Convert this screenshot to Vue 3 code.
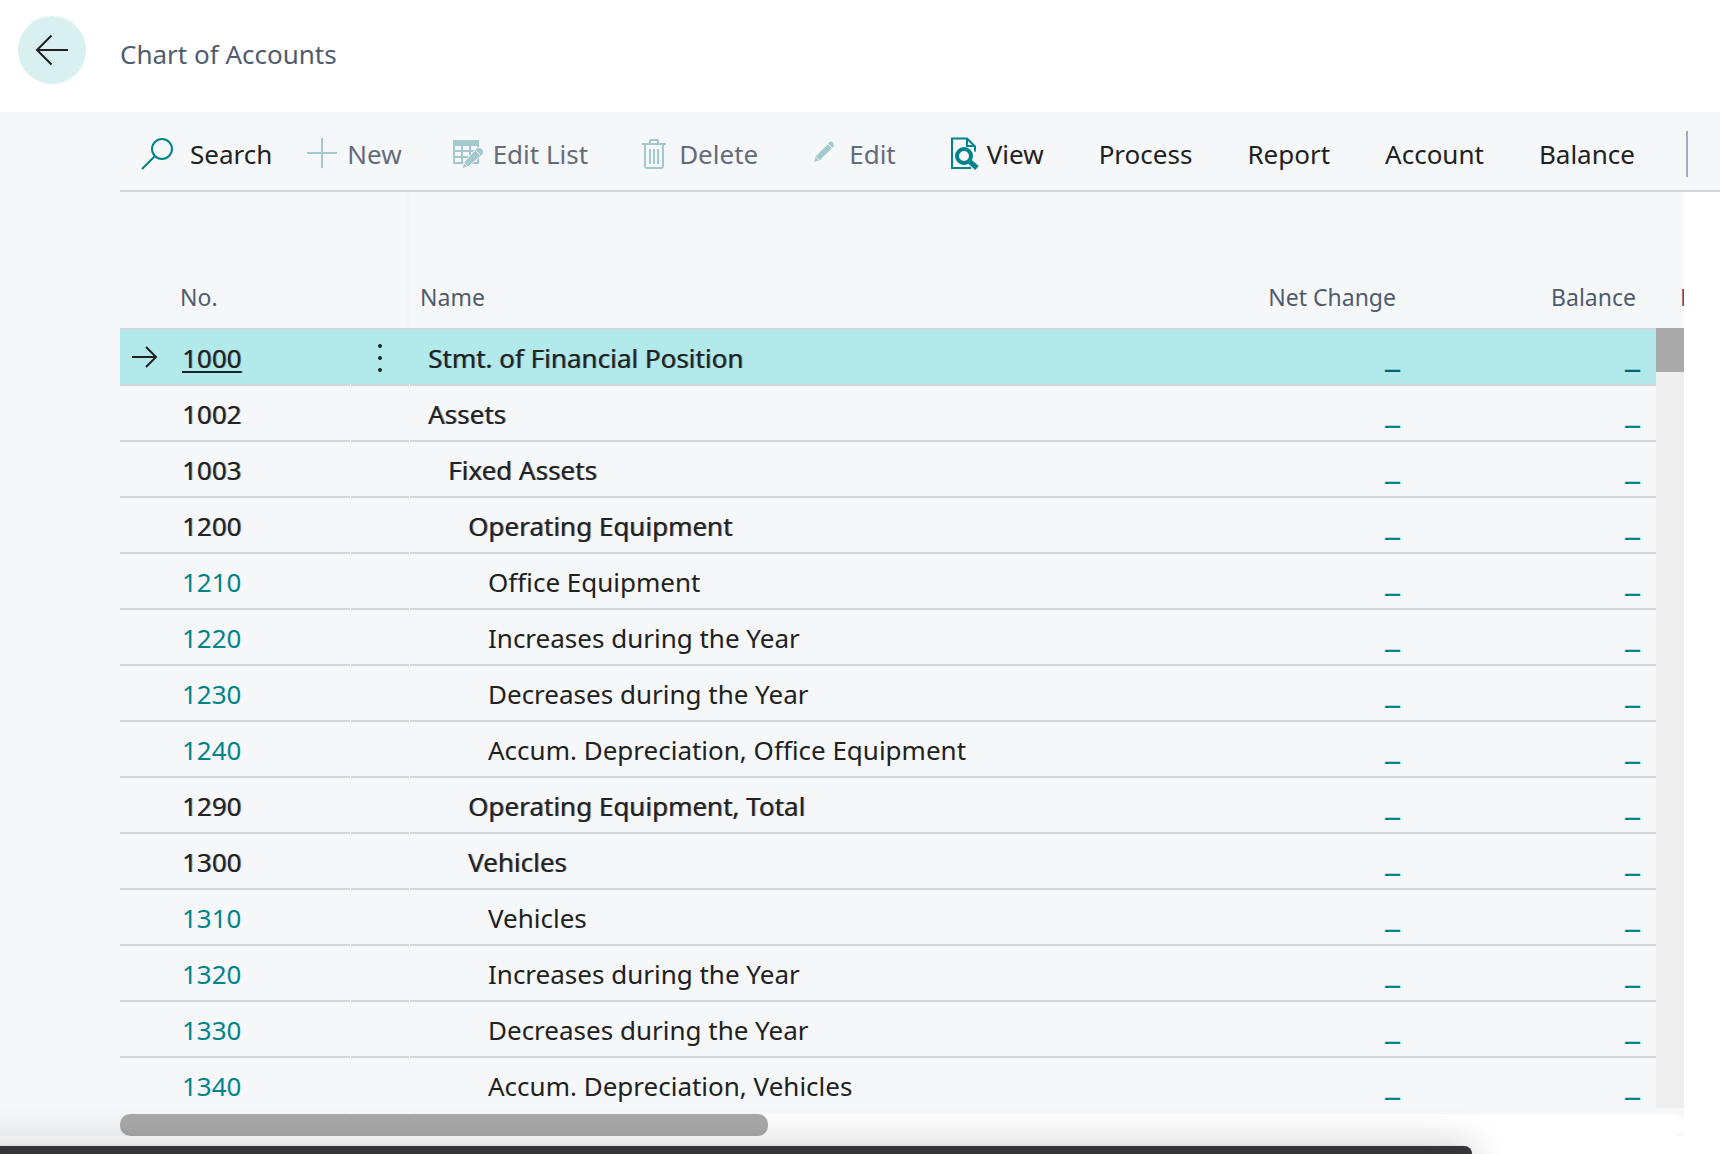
<script setup>
import { ref } from 'vue'

const actions = [
  { label: 'Search', icon: 'search' },
  { label: 'New', icon: 'plus', disabled: true },
  { label: 'Edit List', icon: 'list', disabled: true },
  { label: 'Delete', icon: 'trash', disabled: true },
  { label: 'Edit', icon: 'pencil', disabled: true },
  { label: 'View', icon: 'view' },
  { label: 'Process' },
  { label: 'Report' },
  { label: 'Account' },
  { label: 'Balance' },
]

const accounts = [
  { no: '1000', name: 'Stmt. of Financial Position', level: 0, heading: true },
  { no: '1002', name: 'Assets', level: 0, heading: true },
  { no: '1003', name: 'Fixed Assets', level: 1, heading: true },
  { no: '1200', name: 'Operating Equipment', level: 2, heading: true },
  { no: '1210', name: 'Office Equipment', level: 3 },
  { no: '1220', name: 'Increases during the Year', level: 3 },
  { no: '1230', name: 'Decreases during the Year', level: 3 },
  { no: '1240', name: 'Accum. Depreciation, Office Equipment', level: 3 },
  { no: '1290', name: 'Operating Equipment, Total', level: 2, heading: true },
  { no: '1300', name: 'Vehicles', level: 2, heading: true },
  { no: '1310', name: 'Vehicles', level: 3 },
  { no: '1320', name: 'Increases during the Year', level: 3 },
  { no: '1330', name: 'Decreases during the Year', level: 3 },
  { no: '1340', name: 'Accum. Depreciation, Vehicles', level: 3 },
]

const selected = ref('1000')
</script>

<template>
  <div class="page">
    <header class="top">
      <button class="back" type="button" aria-label="Back">
        <svg width="36" height="36" viewBox="0 0 36 36" fill="none" stroke="#212121" stroke-width="2">
          <path d="M34 18H3M17.500 3.500 3 18l14.500 14.500" />
        </svg>
      </button>
      <h1>Chart of Accounts</h1>
    </header>

    <main class="content">
      <nav class="toolbar" aria-label="Actions">
        <button
          v-for="a in actions"
          :key="a.label"
          type="button"
          :class="['action', { wide: a.icon === 'search', tab: !a.icon }]"
          :disabled="a.disabled"
        >
          <svg v-if="a.icon === 'search'" width="32" height="32" viewBox="0 0 32 32" fill="none" stroke="#00838a" stroke-width="2">
            <circle cx="20" cy="11" r="10" />
            <path d="M13 18 0 31" />
          </svg>
          <svg v-else-if="a.icon === 'plus'" width="32" height="32" viewBox="0 0 32 32" fill="none" stroke="#a3c9cf" stroke-width="2">
            <path d="M15 0v30M0 15h30" />
          </svg>
          <svg v-else-if="a.icon === 'list'" width="32" height="32" viewBox="0 0 32 32">
            <path fill="#a3c9cf" fill-rule="evenodd" d="M0 2h26v24H0zM2 8v4h6V8zM10 8v4h6V8zM18 8v4h6V8zM2 14v4h6v-4zM10 14v4h6v-4zM18 14v4h6v-4zM2 20v4h6v-4zM10 20v4h6v-4zM18 20v4h6v-4z" />
            <path fill="#a3c9cf" stroke="#f5f7f9" stroke-width="1" d="M9 31l2-7L23 11c2-2 4-2 6 0s2 4 0 6L16 28z" />
            <path stroke="#f5f7f9" stroke-width="1" d="m23 13 4 4M11 25l3 3" />
          </svg>
          <svg v-else-if="a.icon === 'trash'" width="32" height="32" viewBox="0 0 32 32" fill="none" stroke="#a3c9cf" stroke-width="2">
            <path d="M3 6h24M11 6V3q0-1 1-1h6q1 0 1 1v3M6 7v21q0 2 2 2h14q2 0 2-2V7M11 11v15M15 11v15M19 11v15" />
          </svg>
          <svg v-else-if="a.icon === 'pencil'" width="32" height="32" viewBox="0 0 32 32">
            <path fill="#a3c9cf" d="M5 24l2-6L19 6c2-3 4-3 5-1s2 3-1 5L11 22z" />
            <path stroke="#f5f7f9" stroke-width="1" d="m19 6 5 5M7 19l3 3" />
          </svg>
          <svg v-else-if="a.icon === 'view'" width="32" height="32" viewBox="0 0 32 32" fill="none" stroke="#00838a">
            <path stroke-width="2" d="M24 30H5V0.500h15l8 8v5M20 0v8h8" />
            <circle cx="17" cy="18" r="7" stroke-width="4" fill="#f5f7f9" />
            <path stroke-width="5" d="m22 23 8 7" />
          </svg>
          <span>{{ a.label }}</span>
        </button>
        <span class="divider"></span>
      </nav>

      <section class="grid">
        <table>
          <colgroup>
            <col class="c-mark" />
            <col class="c-no" />
            <col class="c-menu" />
            <col />
            <col class="c-num" />
            <col class="c-num" />
            <col class="c-next" />
          </colgroup>
          <thead>
            <tr>
              <th colspan="3" class="h-no" scope="col">No.</th>
              <th class="h-name" scope="col">Name</th>
              <th class="h-num" scope="col">Net Change</th>
              <th class="h-num" scope="col">Balance</th>
              <th class="h-next" scope="col">D</th>
            </tr>
          </thead>
          <tbody>
            <tr
              v-for="row in accounts"
              :key="row.no"
              :class="{ selected: row.no === selected, heading: row.heading }"
              @click="selected = row.no"
            >
              <td class="mark">
                <svg v-if="row.no === selected" width="26" height="24" viewBox="0 0 26 24" fill="none" stroke="#212121" stroke-width="2">
                  <path d="M0 12h24M14 2l10 10-10 10" />
                </svg>
              </td>
              <td class="no"><a href="#">{{ row.no }}</a></td>
              <td class="menu">
                <button v-if="row.no === selected" type="button" aria-label="Show more options">
                  <svg width="4" height="28" viewBox="0 0 4 28" fill="#212121">
                    <circle cx="2" cy="2" r="2" />
                    <circle cx="2" cy="14" r="2" />
                    <circle cx="2" cy="26" r="2" />
                  </svg>
                </button>
              </td>
              <td :class="['name', 'level-' + row.level]">{{ row.name }}</td>
              <td class="num"><a href="#">_</a></td>
              <td class="num"><a href="#">_</a></td>
              <td class="next"></td>
            </tr>
          </tbody>
        </table>
        <div class="v-rail"><div class="v-thumb"></div></div>
        <div class="h-rail"><div class="h-thumb"></div></div>
      </section>
    </main>

    <div class="dock"></div>
  </div>
</template>

<style>
body {
  background: #fff;
  overflow: hidden;
}
</style>

<style scoped>
.page {
  font-family: "Noto Sans", "Open Sans", sans-serif;
  color: #212121;
}
button {
  border: 0;
  padding: 0;
  background: none;
  color: inherit;
  font: inherit;
}
svg {
  display: block;
  flex: none;
  overflow: visible;
}
.top {
  display: flex;
  align-items: flex-start;
  gap: 34px;
  padding: 16px 18px 28px;
}
.back {
  display: flex;
  align-items: center;
  justify-content: center;
  width: 68px;
  height: 68px;
  border-radius: 50%;
  background: #d8f0f0;
}
h1 {
  margin: 20px 0 0;
  font-size: 26px;
  font-weight: 400;
  line-height: 36px;
  color: #505c6d;
}
.content {
  padding-left: 120px;
  background: linear-gradient(#f5f7f9, #f5f7f9) 0 0 / 120px 100% no-repeat;
}
.toolbar {
  display: flex;
  align-items: center;
  gap: 51px;
  box-sizing: border-box;
  height: 80px;
  margin-left: -120px;
  padding: 4px 32px 0 142px;
  background:
    linear-gradient(#d3d5d9, #d3d5d9) 120px 100% / 100% 2px no-repeat,
    #f5f7f9;
  font-size: 26px;
  line-height: 34px;
}
.action {
  display: flex;
  align-items: center;
  gap: 8px;
  white-space: nowrap;
}
.action:disabled {
  color: #646c7b;
}
.action.wide {
  gap: 16px;
  margin-right: -16px;
}
.action.tab {
  margin-left: 4px;
}
.divider {
  width: 2px;
  height: 46px;
  margin-left: auto;
  background: #a5abb7;
}
.grid {
  position: relative;
  margin-right: 36px;
  background: #f5f7f9;
}
table {
  width: 100%;
  table-layout: fixed;
  border-collapse: separate;
  border-spacing: 0;
}
.c-mark { width: 62px; }
.c-no { width: 168px; }
.c-menu { width: 59px; }
.c-num { width: 240px; }
.c-next { width: 28px; }
th {
  box-sizing: border-box;
  height: 138px;
  padding: 0 20px 14px 0;
  border-bottom: 2px solid #d3d5d9;
  vertical-align: bottom;
  text-align: left;
  font-size: 23px;
  font-weight: 400;
  line-height: 34px;
  color: #505c6d;
  white-space: nowrap;
}
th.h-no {
  padding-left: 60px;
  background: linear-gradient(#f3f3f3, #f3f3f3) 100% 0 / 3px 100% no-repeat;
}
th.h-name { padding-left: 11px; }
th.h-num { text-align: right; }
th.h-next {
  padding: 0 0 14px 24px;
  overflow: hidden;
}
td {
  box-sizing: border-box;
  height: 56px;
  padding: 2px 0 0;
  border-bottom: 2px solid #d3d5d9;
  font-size: 26px;
  line-height: 52px;
  white-space: nowrap;
}
tr:last-child td { border-bottom-color: transparent; }
.selected td { background: #b2e9eb; }
.selected td.next { background: none; }
td a {
  color: #00838a;
  text-decoration: none;
}
td.mark { padding: 0 0 0 12px; }
.heading .no a,
.heading .name {
  color: #212121;
  text-shadow: 1px 0 rgba(33, 33, 33, 0.5);
}
.selected .no a {
  text-decoration: underline;
  text-decoration-thickness: 2px;
  text-underline-offset: 3px;
  text-decoration-skip-ink: none;
}
.menu,
.name { position: relative; }
.menu::before,
.name::before {
  content: "";
  position: absolute;
  left: 0;
  bottom: -2px;
  width: 1px;
  height: 2px;
  background: #fff;
}
.menu button {
  display: block;
  margin-left: 28px;
}
.level-0 { padding-left: 19px; }
.level-1 { padding-left: 39px; }
.level-2 { padding-left: 59px; }
.level-3 { padding-left: 79px; }
td.num {
  padding: 0 16px 6px 0;
  text-align: right;
  font-size: 34px;
  line-height: 48px;
}
.selected .num a { color: #00696e; }
.v-rail {
  position: absolute;
  top: 136px;
  right: 0;
  bottom: 28px;
  width: 28px;
  background: #eee;
}
.v-thumb {
  height: 44px;
  background: #a9a9a9;
}
.h-rail {
  height: 22px;
  border-radius: 10px;
  background: #fff;
}
.h-thumb {
  width: 648px;
  height: 22px;
  border-radius: 10px;
  background: #a9a9a9;
}
.dock {
  position: fixed;
  left: -40px;
  right: 248px;
  bottom: -72px;
  height: 80px;
  border-radius: 8px;
  background: #353539;
  box-shadow: 0 0 1px rgba(0, 0, 0, 0.4), 0 0 40px rgba(0, 0, 0, 0.2);
}
</style>
